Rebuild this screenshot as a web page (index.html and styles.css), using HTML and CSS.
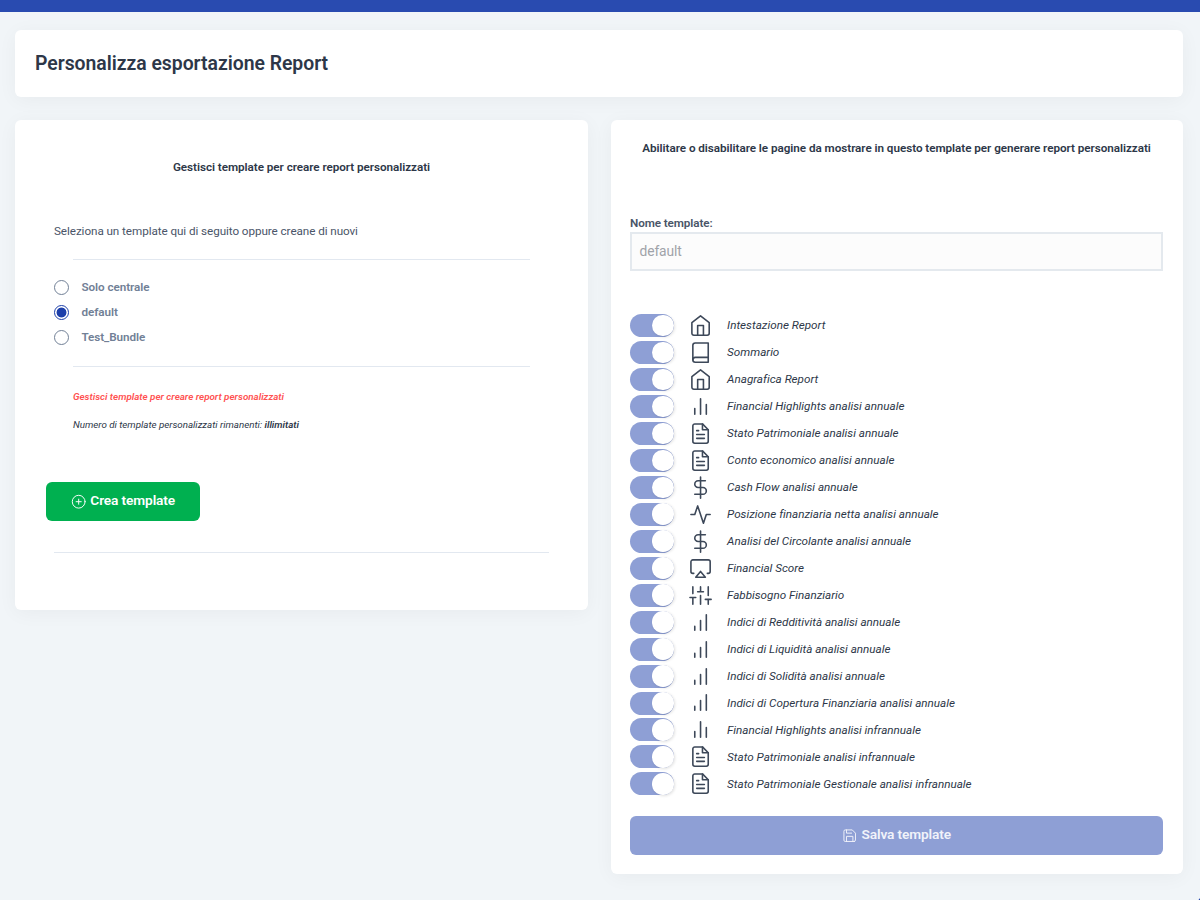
FILE: index.html
```html
<!DOCTYPE html>
<html lang="it">
<head>
<meta charset="utf-8">
<title>Personalizza esportazione Report</title>
<link rel="stylesheet" href="styles.css">
</head>
<body>
<svg class="sprite" aria-hidden="true">
  <symbol id="home" viewBox="0 0 24 24"><path d="M3 9l9-7 9 7v11a2 2 0 0 1-2 2H5a2 2 0 0 1-2-2z"/><path d="M9 22V12h6v10"/></symbol>
  <symbol id="book" viewBox="0 0 24 24"><path d="M4 19.5A2.5 2.5 0 0 1 6.500 17H20"/><path d="M6.500 2H20v20H6.500A2.500 2.500 0 0 1 4 19.500v-15A2.500 2.500 0 0 1 6.500 2z"/></symbol>
  <symbol id="bars" viewBox="0 0 24 24"><path d="M18 20V10M12 20V4M6 20v-6"/></symbol>
  <symbol id="bars-up" viewBox="0 0 24 24"><path d="M12 20V10M18 20V4M6 20v-4"/></symbol>
  <symbol id="file" viewBox="0 0 24 24"><path d="M14 2H6a2 2 0 0 0-2 2v16a2 2 0 0 0 2 2h12a2 2 0 0 0 2-2V8z"/><path d="M14 2v6h6M16 13H8M16 17H8M10 9H8"/></symbol>
  <symbol id="dollar" viewBox="0 0 24 24"><path d="M12 1v22"/><path d="M17 5H9.500a3.500 3.500 0 0 0 0 7h5a3.500 3.500 0 0 1 0 7H6"/></symbol>
  <symbol id="activity" viewBox="0 0 24 24"><path d="M22 12h-4l-3 9L9 3l-3 9H2"/></symbol>
  <symbol id="airplay" viewBox="0 0 24 24"><path d="M5 17H4a2 2 0 0 1-2-2V5a2 2 0 0 1 2-2h16a2 2 0 0 1 2 2v10a2 2 0 0 1-2 2h-1"/><path d="M12 15l5 6H7z"/></symbol>
  <symbol id="sliders" viewBox="0 0 24 24"><path d="M4 21v-7M4 10V3M12 21v-9M12 8V3M20 21v-5M20 12V3M1 14h6M9 8h6M17 16h6"/></symbol>
  <symbol id="plus-circle" viewBox="0 0 24 24"><circle cx="12" cy="12" r="10"/><path d="M12 8v8M8 12h8"/></symbol>
  <symbol id="save" viewBox="0 0 24 24"><path d="M19 21H5a2 2 0 0 1-2-2V5a2 2 0 0 1 2-2h11l5 5v11a2 2 0 0 1-2 2z"/><path d="M17 21v-8H7v8M7 3v5h8"/></symbol>
</svg>
<div class="topbar"></div>
<header class="card page-header"><h1>Personalizza esportazione Report</h1></header>
<main class="columns">
  <section class="card manage">
    <h2>Gestisci template per creare report personalizzati</h2>
    <p class="intro">Seleziona un template qui di seguito oppure creane di nuovi</p>
    <hr class="inset">
    <div class="radios">
      <label class="radio"><span class="dot"></span>Solo centrale</label>
      <label class="radio"><span class="dot checked"></span>default</label>
      <label class="radio"><span class="dot"></span>Test_Bundle</label>
    </div>
    <hr class="inset">
    <p class="warning">Gestisci template per creare report personalizzati</p>
    <p class="remaining">Numero di template personalizzati rimanenti: <b>illimitati</b></p>
    <button class="btn create"><svg class="btn-icon"><use href="#plus-circle"/></svg><span>Crea template</span></button>
    <hr class="end">
  </section>
  <section class="card editor">
    <h2>Abilitare o disabilitare le pagine da mostrare in questo template per generare report personalizzati</h2>
    <label class="name-label">Nome template:</label>
    <div class="name-input">default</div>
    <ul class="pages">
      <li><span class="toggle"></span><svg class="icon"><use href="#home"/></svg><span class="page">Intestazione Report</span></li>
      <li><span class="toggle"></span><svg class="icon"><use href="#book"/></svg><span class="page">Sommario</span></li>
      <li><span class="toggle"></span><svg class="icon"><use href="#home"/></svg><span class="page">Anagrafica Report</span></li>
      <li><span class="toggle"></span><svg class="icon"><use href="#bars"/></svg><span class="page">Financial Highlights analisi annuale</span></li>
      <li><span class="toggle"></span><svg class="icon"><use href="#file"/></svg><span class="page">Stato Patrimoniale analisi annuale</span></li>
      <li><span class="toggle"></span><svg class="icon"><use href="#file"/></svg><span class="page">Conto economico analisi annuale</span></li>
      <li><span class="toggle"></span><svg class="icon"><use href="#dollar"/></svg><span class="page">Cash Flow analisi annuale</span></li>
      <li><span class="toggle"></span><svg class="icon"><use href="#activity"/></svg><span class="page">Posizione finanziaria netta analisi annuale</span></li>
      <li><span class="toggle"></span><svg class="icon"><use href="#dollar"/></svg><span class="page">Analisi del Circolante analisi annuale</span></li>
      <li><span class="toggle"></span><svg class="icon"><use href="#airplay"/></svg><span class="page">Financial Score</span></li>
      <li><span class="toggle"></span><svg class="icon"><use href="#sliders"/></svg><span class="page">Fabbisogno Finanziario</span></li>
      <li><span class="toggle"></span><svg class="icon"><use href="#bars-up"/></svg><span class="page">Indici di Redditività analisi annuale</span></li>
      <li><span class="toggle"></span><svg class="icon"><use href="#bars-up"/></svg><span class="page">Indici di Liquidità analisi annuale</span></li>
      <li><span class="toggle"></span><svg class="icon"><use href="#bars-up"/></svg><span class="page">Indici di Solidità analisi annuale</span></li>
      <li><span class="toggle"></span><svg class="icon"><use href="#bars-up"/></svg><span class="page">Indici di Copertura Finanziaria analisi annuale</span></li>
      <li><span class="toggle"></span><svg class="icon"><use href="#bars"/></svg><span class="page">Financial Highlights analisi infrannuale</span></li>
      <li><span class="toggle"></span><svg class="icon"><use href="#file"/></svg><span class="page">Stato Patrimoniale analisi infrannuale</span></li>
      <li><span class="toggle"></span><svg class="icon"><use href="#file"/></svg><span class="page">Stato Patrimoniale Gestionale analisi infrannuale</span></li>
    </ul>
    <button class="btn save"><svg class="btn-icon"><use href="#save"/></svg><span>Salva template</span></button>
  </section>
</main>
<div class="corner-badge"></div>
</body>
</html>
```
FILE: styles.css
```css
* { box-sizing: border-box; }
body {
  margin: 0;
  height: 900px;
  overflow: hidden;
  background: #f1f5f8;
  color: #2d3748;
  font-family: Roboto, "Liberation Sans", sans-serif;
  font-size: 11.7px;
}
h1, h2, p, ul { margin: 0; padding: 0; }
hr { height: 1px; margin: 0; border: 0; background: #e2e8f0; }
svg { fill: none; stroke: currentColor; stroke-linecap: round; stroke-linejoin: round; flex: none; }
.sprite { display: none; }
.topbar { height: 12px; background: #294bb0; }
.card {
  background: #fff;
  border-radius: 6px;
  box-shadow: 0 3px 20px rgba(0, 0, 0, 0.043);
}
.page-header {
  display: flex;
  align-items: center;
  width: 1167.5px;
  height: 67px;
  margin: 18px 0 23.4px 15px;
  padding: 1px 0 0 20px;
}
h1 { font-size: 19.4px; font-weight: 600; line-height: 28px; letter-spacing: -0.03px; white-space: nowrap; }
h2 { font-size: 11.7px; font-weight: 600; line-height: 18px; letter-spacing: -0.04px; text-align: center; white-space: nowrap; }
.columns {
  display: grid;
  grid-template-columns: 573px 571.5px;
  column-gap: 23px;
  align-items: start;
  margin-left: 15px;
}
.manage { height: 490px; padding: 37.8px 39px 0; }
.intro { margin-top: 45.9px; line-height: 18px; letter-spacing: -0.07px; color: #4a5568; }
.inset { margin: 0 19px; }
.intro + .inset { margin-top: 19px; }
.radios { display: flex; flex-direction: column; gap: 9px; margin: 19.2px 0 20.4px; }
.radio {
  display: flex;
  align-items: center;
  gap: 12px;
  height: 16px;
  color: #718096;
  font-weight: 600;
  letter-spacing: -0.06px;
}
.dot { width: 15.4px; height: 15.4px; border: 1px solid #718096; border-radius: 50%; background: #fff; }
.dot.checked { border-color: #1c3faa; background: radial-gradient(circle, #1c3faa 4.6px, transparent 5.3px); }
.warning { margin: 23.2px 0 0 19px; font-size: 9.8px; font-weight: 600; font-style: italic; line-height: 14px; color: #ff5252; }
.remaining { margin: 14px 0 0 19px; font-size: 9.8px; font-style: italic; line-height: 14px; letter-spacing: -0.02px; }
.remaining b { font-weight: 600; }
.btn {
  display: flex;
  align-items: center;
  justify-content: center;
  gap: 4px;
  height: 38.5px;
  padding: 0;
  border: 0;
  border-radius: 6px;
  color: #fff;
  font: 600 13.7px Roboto, "Liberation Sans", sans-serif;
  letter-spacing: -0.12px;
}
.btn span { padding-bottom: 2px; }
.btn-icon { width: 15.4px; height: 15.4px; stroke-width: 1.5; }
.create { width: 154px; margin: 50.4px 0 31px -8px; background: #00b050; }
.save { color: #f1f3fa; }
.end { margin-right: 0; }
.editor { height: 753.5px; padding: 18.5px 19.4px 0 19px; }
.editor h2 { display: flex; justify-content: center; }
.name-label { display: block; margin-top: 57px; font-weight: 600; line-height: 18px; letter-spacing: -0.1px; color: #4a5568; }
.name-input {
  display: flex;
  align-items: center;
  height: 38.7px;
  padding-left: 7.5px;
  border: 2px solid #e4e9ee;
  background: #fcfcfc;
  color: #a0a3a9;
  font-size: 13.8px;
  letter-spacing: -0.1px;
}
.pages { margin-top: 41.4px; list-style: none; }
.pages li { display: flex; align-items: center; height: 26.97px; }
.toggle {
  display: flex;
  align-items: center;
  justify-content: flex-end;
  width: 43.5px;
  height: 23px;
  border-radius: 12px;
  background: #8e9fd5;
}
.toggle::after {
  content: "";
  width: 21.5px;
  height: 21.5px;
  border-radius: 50%;
  background: #fff;
  box-shadow: 1px 1px 3px rgba(0, 0, 0, 0.12);
}
.icon { width: 23.1px; height: 23.1px; margin-left: 15.5px; stroke-width: 1.65; color: #3d4859; overflow: visible; }
.page { margin-left: 15px; font-style: italic; letter-spacing: -0.01px; white-space: nowrap; }
.save { width: 100%; margin-top: 18.7px; background: #8e9fd5; }
.corner-badge {
  position: fixed;
  right: -32px;
  bottom: -30px;
  width: 38px;
  height: 38px;
  border-radius: 50%;
  background: #1c3faa;
  transform: translate(0.5px, 0.5px);
}
```
